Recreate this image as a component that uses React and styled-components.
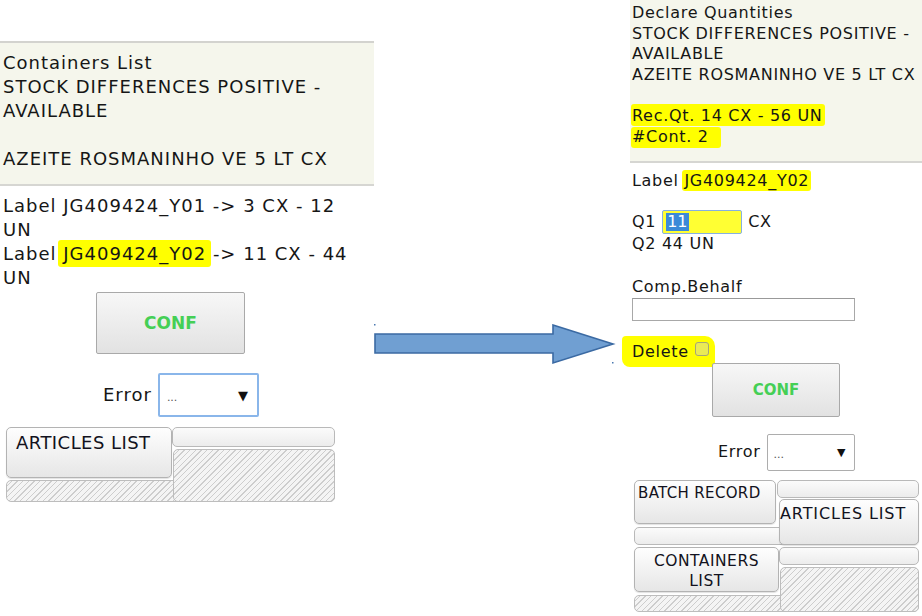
import React from 'react';
import styled, { createGlobalStyle } from 'styled-components';

const Global = createGlobalStyle`
  html, body { margin: 0; padding: 0; background: #fff; }
  body { font-family: "DejaVu Sans", Verdana, sans-serif; color: #161616; }
  * { box-sizing: border-box; }
`;

const Page = styled.div`
  width: 922px;
  height: 616px;
  display: flex;
  align-items: flex-start;
  overflow: hidden;
  background: #fff;
`;

const Screen = styled.div`
  flex: none;
  width: ${p => p.$w}px;
  padding-top: ${p => p.$top}px;
  font-size: ${p => p.$fs}px;
  line-height: ${p => p.$lh}px;
  letter-spacing: ${p => p.$ls}px;
`;

const Header = styled.div`
  background: #f5f6ec;
  border-top: ${p => (p.$topBorder ? '2px solid #d3d3cf' : 'none')};
  border-bottom: 2px solid #d6d6d2;
  padding: ${p => p.$pad};
`;

const Line = styled.div`
  white-space: nowrap;
`;

const BlankLine = styled.div`
  height: ${p => p.$h}px;
`;

const Body = styled.div`
  width: ${p => p.$w}px;
  padding: ${p => p.$pad};
`;

const Mark = styled.span`
  background: #ffff00;
  padding: ${p => p.$pad || '2px 3px'};
  margin: ${p => p.$margin || '0 -3px'};
  border-radius: 3px;
`;

const Center = styled.div`
  display: flex;
  justify-content: center;
  margin-top: ${p => p.$mt}px;
`;

const ConfButton = styled.button`
  width: ${p => p.$w}px;
  height: ${p => p.$h}px;
  border: 1px solid #a9a9a9;
  border-radius: 2px;
  background: linear-gradient(#f7f7f7, #e2e2e2);
  color: #45cf55;
  font-family: "DejaVu Sans", Verdana, sans-serif;
  font-weight: bold;
  font-size: ${p => p.$fs}px;
  padding: 0;
`;

const ErrorRow = styled.div`
  display: flex;
  align-items: center;
  gap: ${p => p.$gap}px;
  margin-top: ${p => p.$mt}px;
  margin-left: ${p => p.$ml}px;
`;

const Select = styled.div`
  width: ${p => p.$w}px;
  height: ${p => p.$h}px;
  border: ${p => (p.$focus ? '2px solid #8ab6ea' : '1px solid #adadad')};
  border-radius: 2px;
  background: #fff;
  display: flex;
  align-items: center;
  justify-content: space-between;
  letter-spacing: 0;
  padding: 0 ${p => p.$padR}px 0 ${p => p.$padL}px;
`;

const Dots = styled.span`
  font-size: 11px;
  color: #555;
  line-height: 1;
  padding-top: 4px;
`;

const Caret = styled.span`
  font-size: ${p => p.$fs}px;
  color: #111;
  line-height: 1;
`;

const TabGrid = styled.div`
  display: grid;
  grid-template-columns: ${p => p.$cols};
  grid-template-rows: ${p => p.$rows};
  margin: ${p => p.$margin};
  width: ${p => p.$w}px;
`;

const Seg = styled.div`
  grid-column: ${p => p.$col};
  grid-row: ${p => p.$row};
  margin: ${p => p.$m || '0'};
  border: 1px solid #b3b3b3;
  border-radius: 5px;
  background: linear-gradient(#fefefe, #e6e6e6);
  box-shadow: 0 1px 1px rgba(0, 0, 0, 0.12);
  padding: ${p => p.$pad || '0'};
  text-align: ${p => p.$align || 'left'};
  font-size: ${p => p.$fs}px;
  letter-spacing: ${p => p.$ls}px;
  line-height: ${p => p.$lh}px;
  white-space: nowrap;
  color: #121220;
  position: relative;
  z-index: 1;
`;

const Hatch = styled.div`
  grid-column: ${p => p.$col};
  grid-row: ${p => p.$row};
  margin: ${p => p.$m || '0'};
  border: 1px solid #bdbdbd;
  border-radius: 5px;
  background: repeating-linear-gradient(135deg, #f4f4f4 0 3px, #cdcdcd 3px 4px);
`;

const Plain = styled.div`
  grid-column: ${p => p.$col};
  grid-row: ${p => p.$row};
  margin: ${p => p.$m || '0'};
  border: 1px solid #b9b9b9;
  border-radius: 5px;
  background: linear-gradient(#fbfbfb, #ececec);
`;

const ArrowCell = styled.div`
  flex: none;
  width: ${p => p.$w}px;
  padding-top: ${p => p.$top}px;
  display: flex;
`;

const FieldRow = styled.div`
  display: flex;
  align-items: center;
  gap: 6px;
  height: 24px;
  margin-top: ${p => p.$mt}px;
`;

const QtyField = styled.div`
  width: 80px;
  height: 24px;
  border: 1px solid #86b0e0;
  border-radius: 2px;
  background: #ffff33;
  display: flex;
  align-items: center;
  padding-left: 3px;
`;

const Selected = styled.span`
  background: #3b8ad8;
  color: #fff;
  padding: 0 1px;
  line-height: 18px;
  letter-spacing: 0;
`;

const TextBox = styled.div`
  width: 223px;
  height: 23px;
  border: 1px solid #a8a8a8;
  border-top-color: #999;
  background: #fff;
`;

const Spaced = styled.div`
  margin-top: ${p => p.$mt}px;
`;

const DeleteMark = styled.span`
  display: inline-flex;
  align-items: center;
  gap: 6px;
  background: #ffff00;
  padding: 6px 6px 5px 10px;
  margin-left: -10px;
  border-radius: 4px 10px 3px 8px;
  line-height: 20px;
`;

const Check = styled.span`
  width: 14px;
  height: 14px;
  border: 1px solid #a5a57a;
  border-radius: 3px;
  background: #eaea55;
  margin-top: -6px;
`;

function Arrow() {
  return (
    <svg width="242" height="42" viewBox="0 0 242 42">
      <rect x="0" y="0" width="1.5" height="1.5" fill="#4a78b0" />
      <rect x="238" y="38" width="1.5" height="1.5" fill="#4a78b0" />
      <path
        d="M1 10 L179 10 L179 1 L239 20 L179 39 L179 29 L1 29 Z"
        fill="#709fd2"
        stroke="#3b6aa3"
        strokeWidth="1.6"
        strokeLinejoin="miter"
      />
    </svg>
  );
}

function LeftScreen() {
  return (
    <Screen $w={374} $top={41} $fs={18} $lh={24} $ls={1}>
      <Header $topBorder $pad="8px 3px 13px 3px">
        <Line>Containers List</Line>
        <Line>STOCK DIFFERENCES POSITIVE -</Line>
        <Line>AVAILABLE</Line>
        <BlankLine $h={24} />
        <Line>AZEITE ROSMANINHO VE 5 LT CX</Line>
      </Header>
      <Body $w={341} $pad="8px 0 0 3px">
        <Line>Label JG409424_Y01 -&gt; 3 CX - 12</Line>
        <Line>UN</Line>
        <Line>
          Label <Mark $pad="3px 5px" $margin="0 -5px">JG409424_Y02</Mark> -&gt; 11 CX - 44
        </Line>
        <Line>UN</Line>
      </Body>
      <Body $w={341} $pad="0">
        <Center $mt={2}>
          <ConfButton $w={149} $h={62} $fs={17}>CONF</ConfButton>
        </Center>
      </Body>
      <ErrorRow $gap={6} $mt={19} $ml={103}>
        <span>Error</span>
        <Select $w={101} $h={44} $focus $padL={7} $padR={9}>
          <Dots>...</Dots>
          <Caret $fs={13}>▼</Caret>
        </Select>
      </ErrorRow>
      <TabGrid $w={329} $cols="166px 1fr" $rows="20px 31px 24px" $margin="10px 0 0 6px">
        <Hatch $col="1 / 3" $row="3 / 4" $m="2px 0 0 0" />
        <Hatch $col="2 / 3" $row="2 / 4" $m="2px 0 0 1px" />
        <Plain $col="2 / 3" $row="1 / 2" />
        <Seg $col="1 / 2" $row="1 / 3" $pad="3px 0 0 9px" $fs={18} $ls={0.45} $lh={24}>
          ARTICLES LIST
        </Seg>
      </TabGrid>
    </Screen>
  );
}

function RightScreen() {
  return (
    <Screen $w={292} $top={0} $fs={16} $lh={20.67} $ls={0.7}>
      <Header $pad="3px 2px 13px 2px">
        <Line>Declare Quantities</Line>
        <Line>STOCK DIFFERENCES POSITIVE -</Line>
        <Line>AVAILABLE</Line>
        <Line>AZEITE ROSMANINHO VE 5 LT CX</Line>
        <BlankLine $h={20.67} />
        <Line>
          <Mark $pad="2px 2px 1px 1px" $margin="0 -2px 0 -1px">Rec.Qt. 14 CX - 56 UN</Mark>
        </Line>
        <Line>
          <Mark $pad="0 12px 2px 1px" $margin="0 -12px 0 -1px">#Cont. 2</Mark>
        </Line>
      </Header>
      <Body $w={292} $pad="8px 0 0 2px">
        <Line>
          Label <Mark $pad="1px 2px" $margin="0 -2px">JG409424_Y02</Mark>
        </Line>
        <FieldRow $mt={19}>
          <span>Q1</span>
          <QtyField>
            <Selected>11</Selected>
          </QtyField>
          <span>CX</span>
        </FieldRow>
        <Line>Q2 44 UN</Line>
        <Spaced $mt={22}>
          <Line>Comp.Behalf</Line>
          <TextBox />
        </Spaced>
        <Spaced $mt={15}>
          <DeleteMark>
            Delete <Check />
          </DeleteMark>
        </Spaced>
      </Body>
      <Body $w={292} $pad="0">
        <Center $mt={-4}>
          <ConfButton $w={128} $h={54} $fs={15}>CONF</ConfButton>
        </Center>
      </Body>
      <ErrorRow $gap={6} $mt={17} $ml={88}>
        <span>Error</span>
        <Select $w={88} $h={37} $padL={6} $padR={8}>
          <Dots>...</Dots>
          <Caret $fs={11}>▼</Caret>
        </Select>
      </ErrorRow>
      <TabGrid $w={285} $cols="143px 1fr" $rows="18px 26px 21px" $margin="9px 0 0 4px">
        <Plain $col="1 / 3" $row="3 / 4" $m="3px 0 0 0" />
        <Plain $col="2 / 3" $row="1 / 2" />
        <Seg $col="1 / 2" $row="1 / 3" $m="0 1px 0 0" $pad="2px 0 0 3px" $fs={15} $ls={0.35} $lh={20}>
          BATCH RECORD
        </Seg>
        <Seg $col="2 / 3" $row="2 / 4" $m="1px 0 0 2px" $pad="4px 0 0 0" $fs={16} $ls={0.9} $lh={20}>
          ARTICLES LIST
        </Seg>
      </TabGrid>
      <TabGrid $w={285} $cols="145px 1fr" $rows="18px 27px 20px" $margin="2px 0 0 4px">
        <Hatch $col="1 / 3" $row="3 / 4" $m="3px 0 0 0" />
        <Hatch $col="2 / 3" $row="2 / 4" $m="2px 0 0 1px" />
        <Plain $col="2 / 3" $row="1 / 2" />
        <Seg $col="1 / 2" $row="1 / 3" $pad="3px 0 0 0" $align="center" $fs={15.5} $ls={0.5} $lh={20}>
          CONTAINERS
          <br />
          LIST
        </Seg>
      </TabGrid>
    </Screen>
  );
}

export default function App() {
  return (
    <>
      <Global />
      <Page>
        <LeftScreen />
        <ArrowCell $w={256} $top={324}>
          <Arrow />
        </ArrowCell>
        <RightScreen />
      </Page>
    </>
  );
}
